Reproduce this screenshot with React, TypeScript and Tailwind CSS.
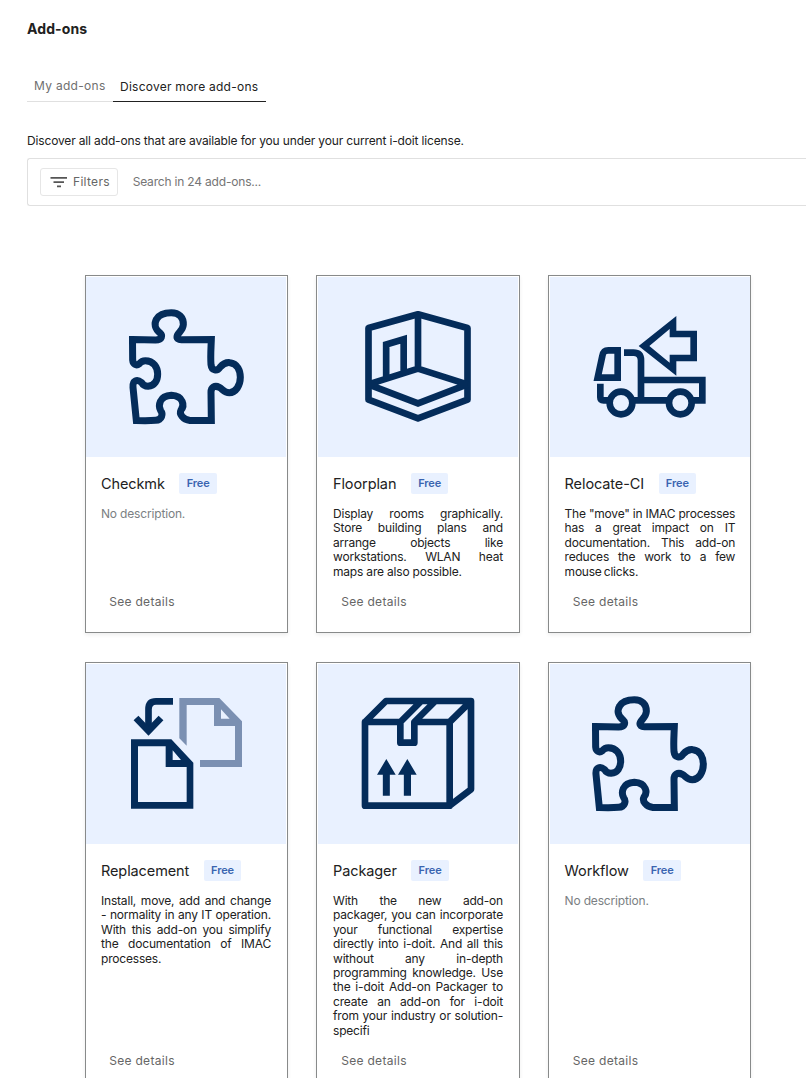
import type { ReactNode } from "react";

const NAVY = "#042c5a";

function Art({ viewBox, children }: { viewBox: string; children: ReactNode }) {
  return (
    <svg viewBox={viewBox} className="block h-[180px] w-[200px]" fill="none" stroke={NAVY} strokeWidth={20}>
      {children}
    </svg>
  );
}

function Puzzle({ viewBox = "6 9 600 540" }: { viewBox?: string }) {
  return (
    <Art viewBox={viewBox}>
      <path
        strokeWidth={21}
        d="M145.500 196.500L215 198C235 198 236 184 228 177C213 165 209 149 218 135C226 121 241 116 262 116C285 116 299 130 298 152C297 168 285 174 280 184C276 194 284 197 292 197L382 196.500C381 225 379 245 381 272C383 291 400 292 408 280C420 266 430 265 438 266C460 268 469 290 469 310C469 335 455 356 436 356C420 356 416 345 406 340C392 333 381 340 381 355L382 439.500H318C296 437 285 420 291 408C302 395 299 366 262 364C225 366 222 395 230 410C238 420 234 438 215 439C200 440 175 440 157 439.500L147 340C145 318 160 315 172 325C176 332 182 337 192 337C212 335 221 320 221 300C221 280 208 260 184 260C175 260 170 264 166 269C156 277 147 270 146 258Z"
      />
    </Art>
  );
}

function Floorplan() {
  return (
    <Art viewBox="6 9 600 540">
      <path strokeLinejoin="round" d="M157.500 162L306 121L454.500 162V377L306 433L157.500 377Z" />
      <path d="M306 121V284M157 331L306 284L454 331M157 331L306 388L454 331M210.500 308V211.500L263 196V294" />
    </Art>
  );
}

function Truck() {
  return (
    <Art viewBox="9 9 600 540">
      <path d="M152 311H212V229H184C172 229 168 235 166 246ZM231 236H259Q282 236 282 259V379M282 318H466V379H436M258 379H364M160 329V370Q160 379 170 379H184" />
      <circle cx="222" cy="387" r="34" />
      <circle cx="400" cy="387" r="34" />
      <path
        fill={NAVY}
        stroke="none"
        fillRule="evenodd"
        d="M275 216L388 126V170H450V262H388V305ZM307 216L368 266V242H430V190H368V165Z"
      />
    </Art>
  );
}

function Replacement() {
  return (
    <Art viewBox="6 12 600 540">
      <path
        fill={NAVY}
        stroke="none"
        fillRule="evenodd"
        d="M141 238H262L328 308V446H141ZM162 259V426H308V321H245V259ZM266 271V300H291Z"
      />
      <path
        fill="#7b90b2"
        stroke="none"
        fillRule="evenodd"
        d="M286 114H406L474 184V321H348V300H453V198H390V135H308V257L286 235ZM411 148V176H437Z"
      />
      <path d="M267 124H216Q193.500 124 193.500 148V210" />
      <path d="M156 174L193.500 213L231 174" />
    </Art>
  );
}

function Packager() {
  return (
    <Art viewBox="6 12 600 540">
      <path
        strokeLinejoin="round"
        strokeWidth={20}
        d="M253 186H147V437H401V186H295M147 186L210 123H465L401 186M465 123V388L401 437M316 123L253 186V248H295V186L358 123"
      />
      <path
        fill={NAVY}
        stroke="none"
        d="M211 297L239 344H221.500V407H200.500V344H183ZM274 297L302 344H285V407H263.500V344H246Z"
      />
    </Art>
  );
}

type Addon = { name: string; text?: string; art: ReactNode; place: string; gap: string; spacing?: string };

const addons: Addon[] = [
  { name: "Checkmk", art: <Puzzle />, place: "justify-start", gap: "pl-[15px] pr-4" },
  {
    name: "Floorplan",
    text: "Display rooms graphically. Store building plans and arrange objects like workstations. WLAN heat maps are also possible.",
    art: <Floorplan />,
    place: "justify-center",
    gap: "pl-4 pr-4",
  },
  {
    name: "Relocate-CI",
    text: 'The "move" in IMAC processes has a great impact on IT documentation. This add-on reduces the work to a few mouse clicks.',
    art: <Truck />,
    place: "justify-end",
    gap: "pl-[15.600px] pr-[14.800px]",
    spacing: "tracking-[-0.22px] [word-spacing:-1px]",
  },
  {
    name: "Replacement",
    text: "Install, move, add and change - normality in any IT operation. With this add-on you simplify the documentation of IMAC processes.",
    art: <Replacement />,
    place: "justify-start",
    gap: "pl-[15px] pr-4",
  },
  {
    name: "Packager",
    text: "With the new add-on packager, you can incorporate your functional expertise directly into i-doit. And all this without any in-depth programming knowledge. Use the i-doit Add-on Packager to create an add-on for i-doit from your industry or solution-specifi",
    art: <Packager />,
    place: "justify-center",
    gap: "pl-4 pr-4",
  },
  {
    name: "Workflow",
    art: <Puzzle viewBox="9 9 600 540" />,
    place: "justify-end",
    gap: "pl-[15.600px] pr-[14.800px]",
  },
];

function Card({ addon }: { addon: Addon }) {
  return (
    <article className="flex flex-col border border-[#888a8a] bg-white pt-px shadow-[0_2px_4px_rgba(0,0,0,0.07)]">
      <div className={`flex ${addon.place}`}>
        <div className="bg-[#e9f1ff]">{addon.art}</div>
      </div>
      <div className={`flex grow flex-col pt-4 ${addon.gap}`}>
        <div className="flex h-[21px] items-center">
          <h2 className="text-[14.500px] leading-[21px] tracking-[-0.1px] text-[#212121]">{addon.name}</h2>
          <span className="ml-[14.500px] flex h-[21px] items-center rounded-[2px] bg-[#e9f1ff] px-[7.300px] text-[11px] font-semibold tracking-[-0.1px] text-[#3a64b0]">
            Free
          </span>
        </div>
        {addon.text ? (
          <p
            className={`mt-[13px] text-justify text-[12px] leading-[14.400px] text-[#212121] ${addon.spacing ?? "tracking-[-0.19px]"}`}
          >
            {addon.text}
          </p>
        ) : (
          <p className="mt-[13px] text-[12px] leading-[14.400px] tracking-[-0.17px] text-[#7b7f83]">No description.</p>
        )}
        <button className="mt-auto mb-[22px] ml-[8.200px] self-start text-[12px] leading-4 tracking-[0.3px] text-[#666]">
          See details
        </button>
      </div>
    </article>
  );
}

export default function App() {
  return (
    <div className="h-[1083px] overflow-hidden bg-white font-['Inter',sans-serif] text-[#212121]">
      <div className="flex h-[1078px] flex-col overflow-hidden pl-[27px]">
        <h1 className="mt-[19px] text-[14px] leading-5 font-bold tracking-[0.1px]">Add-ons</h1>
        <div className="mt-[33px] flex h-[30px] shrink-0">
          <div className="w-[86px] border-b border-[#e0e0e0] pt-[6px] pl-[7px] text-[12px] leading-4 tracking-[0.3px] text-[#6f6f6f]">
            My add-ons
          </div>
          <div className="w-[153px] border-b border-[#212121] pt-[7px] pl-[7px] text-[12px] leading-4 tracking-[0.25px] whitespace-nowrap">
            Discover more add-ons
          </div>
        </div>
        <p className="mt-[31px] text-[12px] leading-4 tracking-[-0.15px]">
          Discover all add-ons that are available for you under your current i-doit license.
        </p>
        <div className="mt-[9px] flex h-12 shrink-0 items-center rounded-l-[3px] border border-r-0 border-[#e0e0e0] pl-3">
          <div className="flex h-7 w-[78px] items-center rounded-[3px] border border-[#e6e6e6] pl-[9px] text-[12px] tracking-[0.3px] text-[#666]">
            <svg viewBox="0 0 18 12" className="mr-[5px] h-3 w-[18px]" fill="#555">
              <path d="M0.500 1H17V2.800H0.500ZM3.500 5.200H14V7H3.500ZM7 9.500H11V11.300H7Z" />
            </svg>
            Filters
          </div>
          <span className="ml-[14.700px] text-[12px] tracking-[-0.19px] text-[#757575]">Search in 24 add-ons...</span>
        </div>
        <div className="mt-[69px] ml-[58px] grid shrink-0 grid-cols-[203px_204px_203px] grid-rows-[358px_430px] gap-x-7 gap-y-[29px]">
          {addons.map((addon) => (
            <Card key={addon.name} addon={addon} />
          ))}
        </div>
      </div>
    </div>
  );
}
